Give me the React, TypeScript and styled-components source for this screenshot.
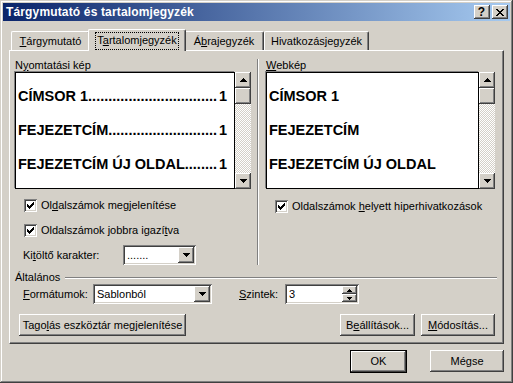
import React from "react";
import styled, { createGlobalStyle, css } from "styled-components";

const GlobalStyle = createGlobalStyle`
  html, body { margin: 0; padding: 0; background: #d4d0c8; }
  body { font-family: "Liberation Sans", Arial, sans-serif; font-size: 11px; line-height: 13px; color: #000; }
  * { box-sizing: border-box; }
`;

const raised = css`
  box-shadow: inset -1px -1px #404040, inset 1px 1px #fff, inset -2px -2px #808080, inset 2px 2px #d4d0c8;
`;
const sunken = css`
  box-shadow: inset 1px 1px #808080, inset -1px -1px #fff, inset 2px 2px #404040, inset -2px -2px #d4d0c8;
`;

const Window = styled.div`
  width: 513px;
  height: 383px;
  padding: 3px;
  background: #d4d0c8;
  box-shadow: inset -1px -1px #404040, inset 1px 1px #d4d0c8, inset -2px -2px #808080, inset 2px 2px #fff;
  display: flex;
  flex-direction: column;
`;

const TitleBar = styled.div`
  height: 18px;
  display: flex;
  align-items: center;
  justify-content: space-between;
  padding: 0 2px 0 3px;
  background: linear-gradient(to right, #0a246a, #a6caf0);
`;

const TitleText = styled.span`
  color: #fff;
  font-weight: bold;
  font-size: 12px;
  letter-spacing: 0.15px;
`;

const CaptionButtons = styled.div`
  display: flex;
  gap: 2px;
`;

const CaptionButton = styled.div`
  width: 16px;
  height: 14px;
  background: #d4d0c8;
  ${raised};
  display: flex;
  align-items: center;
  justify-content: center;
  font-weight: bold;
  font-size: 12px;
  line-height: 12px;
  padding-right: 1px;
`;

const Body = styled.div`
  display: flex;
  flex-direction: column;
  padding: 8px 6px 0 6px;
`;

const TabStrip = styled.div`
  display: flex;
  align-items: flex-end;
  height: 21px;
  padding-left: 2px;
`;

const Tab = styled.div<{ $w: number; $active?: boolean }>`
  width: ${(p) => p.$w}px;
  height: ${(p) => (p.$active ? 22 : 19)}px;
  margin: ${(p) => (p.$active ? "0 -2px -1px -2px" : "0")};
  position: relative;
  z-index: ${(p) => (p.$active ? 2 : 1)};
  background: #d4d0c8;
  border-top: 1px solid #fff;
  border-left: 1px solid #fff;
  border-right: 1px solid #404040;
  border-radius: 2px 2px 0 0;
  box-shadow: inset -1px 0 #808080;
  display: flex;
  justify-content: center;
  align-items: flex-start;
  padding-top: ${(p) => (p.$active ? 2 : 3)}px;
  white-space: nowrap;
`;

const FocusLabel = styled.span`
  border: 1px dotted #000;
  padding: 1px 1px 2px 1px;
`;

const U = styled.span`
  text-decoration: underline;
  text-underline-offset: 1px;
`;

const Panel = styled.div`
  width: 495px;
  height: 294px;
  border-top: 1px solid #fff;
  border-left: 1px solid #fff;
  border-right: 1px solid #404040;
  border-bottom: 1px solid #404040;
  box-shadow: inset -1px -1px #808080;
  display: flex;
  flex-direction: column;
`;

const Columns = styled.div`
  display: flex;
  margin-top: 8px;
`;

const LeftCol = styled.div`
  width: 247px;
  padding-left: 5px;
  display: flex;
  flex-direction: column;
`;

const RightCol = styled.div`
  flex: 1;
  border-left: 1px solid #808080;
  box-shadow: inset 1px 0 #fff;
  padding-left: 8px;
  display: flex;
  flex-direction: column;
`;

const GroupLabel = styled.div`
  height: 13px;
  white-space: nowrap;
`;

const PreviewRow = styled.div`
  display: flex;
  height: 117px;
`;

const PreviewBox = styled.div<{ $w: number; $pr: number }>`
  width: ${(p) => p.$w}px;
  background: #fff;
  border: 1px solid #000;
  box-shadow: -1px -1px 0 #808080;
  padding: 6px ${(p) => p.$pr}px 0 2px;
  font-family: "Liberation Sans", Arial, sans-serif;
  font-weight: bold;
  font-size: 14.5px;
`;

const PreviewLine = styled.div`
  display: flex;
  justify-content: space-between;
  height: 34px;
  line-height: 34px;
  white-space: nowrap;
`;

const ScrollBar = styled.div`
  width: 16px;
  display: flex;
  flex-direction: column;
`;

const ScrollButton = styled.div<{ $h: number }>`
  height: ${(p) => p.$h}px;
  background: #d4d0c8;
  ${raised};
  display: flex;
  align-items: center;
  justify-content: center;
`;

const Track = styled.div`
  flex: 1;
  background: repeating-conic-gradient(#fff 0 25%, #d4d0c8 0 50%) 0 0 / 2px 2px;
`;

const CheckRow = styled.div<{ $mt: number }>`
  display: flex;
  align-items: center;
  gap: 4px;
  margin: ${(p) => p.$mt}px 0 0 9px;
  height: 13px;
  white-space: nowrap;
`;

const CheckBox = styled.span`
  width: 13px;
  height: 13px;
  background: #fff;
  ${sunken};
  display: inline-flex;
  flex: none;
`;

const FieldRow = styled.div<{ $mt: number; $pl: number }>`
  display: flex;
  align-items: center;
  margin-top: ${(p) => p.$mt}px;
  padding-left: ${(p) => p.$pl}px;
  height: 20px;
  white-space: nowrap;
`;

const FieldLabel = styled.span<{ $w: number; $ml?: number }>`
  width: ${(p) => p.$w}px;
  margin-left: ${(p) => p.$ml ?? 0}px;
  flex: none;
`;

const Combo = styled.div<{ $w: number }>`
  width: ${(p) => p.$w}px;
  height: 20px;
  background: #fff;
  ${sunken};
  padding: 2px;
  display: flex;
  align-items: center;
`;

const ComboText = styled.span`
  flex: 1;
  padding-left: 2px;
  overflow: hidden;
`;

const DropButton = styled.div`
  width: 16px;
  height: 16px;
  background: #d4d0c8;
  ${raised};
  display: flex;
  align-items: center;
  justify-content: center;
  flex: none;
`;

const SpinButtons = styled.div`
  width: 15px;
  height: 16px;
  display: flex;
  flex-direction: column;
  flex: none;
`;

const SpinButton = styled.div`
  height: 8px;
  background: #d4d0c8;
  ${raised};
  display: flex;
  align-items: center;
  justify-content: center;
`;

const SectionRow = styled.div`
  display: flex;
  align-items: center;
  margin-top: 6px;
  height: 13px;
  padding: 0 6px 0 5px;
`;

const Rule = styled.div`
  flex: 1;
  height: 2px;
  margin-left: 5px;
  border-top: 1px solid #808080;
  border-bottom: 1px solid #fff;
`;

const ButtonRow = styled.div`
  display: flex;
  align-items: center;
  margin-top: 10px;
  padding: 0 8px 0 9px;
  gap: 6px;
`;

const Spacer = styled.div`
  flex: 1;
`;

const Button = styled.div<{ $w: number; $default?: boolean }>`
  width: ${(p) => p.$w}px;
  height: ${(p) => (p.$default ? 23 : 22)}px;
  background: #d4d0c8;
  ${(p) =>
    p.$default
      ? css`
          border: 1px solid #000;
          ${raised};
        `
      : raised};
  display: flex;
  align-items: center;
  justify-content: center;
  white-space: nowrap;
`;

const Footer = styled.div`
  display: flex;
  justify-content: flex-end;
  gap: 23px;
  margin-top: 6px;
`;

const ArrowDown = () => (
  <svg width="7" height="4" viewBox="0 0 7 4" shapeRendering="crispEdges">
    <path d="M0 0h7v1h-1v1h-1v1h-1v1h-1v-1h-1v-1h-1v-1h-1z" fill="#000" />
  </svg>
);
const ArrowUp = () => (
  <svg width="7" height="4" viewBox="0 0 7 4" shapeRendering="crispEdges">
    <path d="M3 0h1v1h1v1h1v1h1v1h-7v-1h1v-1h1v-1h1z" fill="#000" />
  </svg>
);
const SmallUp = () => (
  <svg width="5" height="3" viewBox="0 0 5 3" shapeRendering="crispEdges">
    <path d="M2 0h1v1h1v1h1v1h-5v-1h1v-1h1z" fill="#000" />
  </svg>
);
const SmallDown = () => (
  <svg width="5" height="3" viewBox="0 0 5 3" shapeRendering="crispEdges">
    <path d="M0 0h5v1h-1v1h-1v1h-1v-1h-1v-1h-1z" fill="#000" />
  </svg>
);
const CheckMark = () => (
  <svg width="13" height="13" viewBox="0 0 13 13" shapeRendering="crispEdges">
    <path
      d="M3 5h1v3h-1z M4 6h1v3h-1z M5 7h1v3h-1z M6 6h1v3h-1z M7 5h1v3h-1z M8 4h1v3h-1z M9 3h1v3h-1z"
      fill="#000"
    />
  </svg>
);
const CloseGlyph = () => (
  <svg width="8" height="7" viewBox="0 0 8 7" shapeRendering="crispEdges">
    <path
      d="M0 0h2v1h-2z M6 0h2v1h-2z M1 1h2v1h-2z M5 1h2v1h-2z M2 2h4v1h-4z M3 3h2v1h-2z M2 4h4v1h-4z M1 5h2v1h-2z M5 5h2v1h-2z M0 6h2v1h-2z M6 6h2v1h-2z"
      fill="#000"
    />
  </svg>
);

const Scroll = () => (
  <ScrollBar>
    <ScrollButton $h={16}>
      <ArrowUp />
    </ScrollButton>
    <ScrollButton $h={16} />
    <Track />
    <ScrollButton $h={16}>
      <ArrowDown />
    </ScrollButton>
  </ScrollBar>
);

const entries = [
  { title: "CÍMSOR 1", dots: 32 },
  { title: "FEJEZETCÍM", dots: 27 },
  { title: "FEJEZETCÍM ÚJ OLDAL", dots: 8 },
];

const Check = ({ children, mt }: { children: React.ReactNode; mt: number }) => (
  <CheckRow $mt={mt}>
    <CheckBox>
      <CheckMark />
    </CheckBox>
    <span>{children}</span>
  </CheckRow>
);

export default function App() {
  return (
    <>
      <GlobalStyle />
      <Window>
        <TitleBar>
          <TitleText>Tárgymutató és tartalomjegyzék</TitleText>
          <CaptionButtons>
            <CaptionButton>?</CaptionButton>
            <CaptionButton>
              <CloseGlyph />
            </CaptionButton>
          </CaptionButtons>
        </TitleBar>
        <Body>
          <TabStrip>
            <Tab $w={79}>
              <span>
                <U>T</U>árgymutató
              </span>
            </Tab>
            <Tab $w={98} $active>
              <FocusLabel>
                T<U>a</U>rtalomjegyzék
              </FocusLabel>
            </Tab>
            <Tab $w={80}>
              <span>
                Á<U>b</U>rajegyzék
              </span>
            </Tab>
            <Tab $w={105}>
              <span>Hivatkozásjegyzék</span>
            </Tab>
          </TabStrip>
          <Panel>
            <Columns>
              <LeftCol>
                <GroupLabel>
                  N<U>y</U>omtatási kép
                </GroupLabel>
                <PreviewRow>
                  <PreviewBox $w={220} $pr={7}>
                    {entries.map((e) => (
                      <PreviewLine key={e.title}>
                        <span>
                          {e.title}
                          {".".repeat(e.dots)}
                        </span>
                        <span>1</span>
                      </PreviewLine>
                    ))}
                  </PreviewBox>
                  <Scroll />
                </PreviewRow>
                <Check mt={10}>
                  Ol<U>d</U>alszámok megjelenítése
                </Check>
                <Check mt={12}>
                  Oldalszámok jobbra igazí<U>t</U>va
                </Check>
                <FieldRow $mt={8} $pl={8}>
                  <FieldLabel $w={100}>
                    Ki<U>t</U>öltő karakter:
                  </FieldLabel>
                  <Combo $w={73}>
                    <ComboText>.......</ComboText>
                    <DropButton>
                      <ArrowDown />
                    </DropButton>
                  </Combo>
                </FieldRow>
              </LeftCol>
              <RightCol>
                <GroupLabel>
                  <U>W</U>ebkép
                </GroupLabel>
                <PreviewRow>
                  <PreviewBox $w={213} $pr={2}>
                    {entries.map((e) => (
                      <PreviewLine key={e.title}>
                        <span>{e.title}</span>
                      </PreviewLine>
                    ))}
                  </PreviewBox>
                  <Scroll />
                </PreviewRow>
                <Check mt={11}>
                  Oldalszámok <U>h</U>elyett hiperhivatkozások
                </Check>
              </RightCol>
            </Columns>
            <SectionRow>
              <span>Általános</span>
              <Rule />
            </SectionRow>
            <FieldRow $mt={0} $pl={13}>
              <FieldLabel $w={70}>
                <U>F</U>ormátumok:
              </FieldLabel>
              <Combo $w={119}>
                <ComboText>Sablonból</ComboText>
                <DropButton>
                  <ArrowDown />
                </DropButton>
              </Combo>
              <FieldLabel $w={46} $ml={27}>
                <U>S</U>zintek:
              </FieldLabel>
              <Combo $w={74}>
                <ComboText>3</ComboText>
                <SpinButtons>
                  <SpinButton>
                    <SmallUp />
                  </SpinButton>
                  <SpinButton>
                    <SmallDown />
                  </SpinButton>
                </SpinButtons>
              </Combo>
            </FieldRow>
            <ButtonRow>
              <Button $w={167}>
                Tago<U>l</U>ás eszköztár megjelenítése
              </Button>
              <Spacer />
              <Button $w={75}>
                B<U>e</U>állítások...
              </Button>
              <Button $w={74}>
                <U>M</U>ódosítás...
              </Button>
            </ButtonRow>
          </Panel>
          <Footer>
            <Button $w={57} $default>
              OK
            </Button>
            <Button $w={74}>Mégse</Button>
          </Footer>
        </Body>
      </Window>
    </>
  );
}
